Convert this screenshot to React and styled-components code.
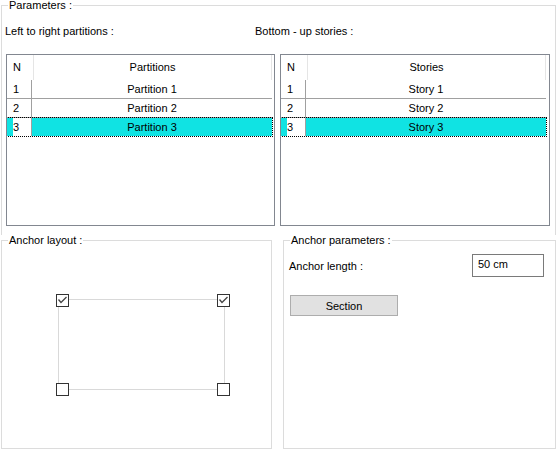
import React from "react";
import styled, { createGlobalStyle } from "styled-components";

const GlobalStyle = createGlobalStyle`
  html, body {
    margin: 0;
    padding: 0;
    background: #ffffff;
  }
  body {
    font-family: "Liberation Sans", Arial, sans-serif;
    font-size: 11px;
    color: #000000;
  }
`;

const Page = styled.div`
  width: 557px;
  height: 449px;
  padding-left: 1px;
  box-sizing: border-box;
  overflow: hidden;
  background: #ffffff;
`;

const Group = styled.fieldset`
  box-sizing: border-box;
  width: ${(p) => p.$width}px;
  height: ${(p) => p.$height}px;
  margin: 0;
  padding: 0;
  min-inline-size: 0;
  border: 1px solid #dcdcdc;
  ${(p) => (p.$open ? "border-bottom: none;" : "")}
`;

const Legend = styled.legend`
  margin-left: 6px;
  padding: 0 1px;
  line-height: 10px;
  font-size: 11px;
`;

const Labels = styled.div`
  display: grid;
  grid-template-columns: 250px 1fr;
  padding-left: 3px;
  margin-top: 15px;
  line-height: 13px;
`;

const Tables = styled.div`
  display: grid;
  grid-template-columns: 269px 270px;
  column-gap: 5px;
  padding-left: 4px;
  margin-top: 16px;
`;

const TableBox = styled.div`
  box-sizing: border-box;
  height: 172px;
  border: 1px solid #828790;
  background: #ffffff;
  overflow: hidden;
`;

const HeaderRow = styled.div`
  display: flex;
  height: 25px;
  line-height: 25px;
`;

const HeaderCell = styled.div`
  box-sizing: border-box;
  width: ${(p) => p.$w}px;
  border-right: 1px solid #e5e5e5;
  padding-left: ${(p) => (p.$center ? 0 : 6)}px;
  text-align: ${(p) => (p.$center ? "center" : "left")};
`;

const Row = styled.div`
  display: flex;
  box-sizing: border-box;
  width: 265px;
  height: ${(p) => (p.$selected ? 18 : 19)}px;
  line-height: 18px;
  border-bottom: ${(p) => (p.$selected ? "none" : "1px solid #a0a0a0")};
  background: ${(p) => (p.$selected ? "#10e3e3" : "#ffffff")};
  outline: ${(p) => (p.$selected ? "1px dotted #000000" : "none")};
`;

const NumCell = styled.div`
  box-sizing: border-box;
  display: flex;
  width: 25px;
  padding-left: 6px;
  border-right: 1px solid #a0a0a0;
`;

const NumText = styled.span`
  flex: 1;
  background: #ffffff;
`;

const NameCell = styled.div`
  flex: 1;
  text-align: center;
`;

const BottomRow = styled.div`
  display: flex;
  column-gap: 11px;
`;

const Diagram = styled.div`
  position: relative;
  width: 174px;
  height: 102px;
  margin: 49px 0 0 54px;
`;

const Frame = styled.div`
  position: absolute;
  left: 2px;
  top: 5px;
  width: 167px;
  height: 91px;
  box-sizing: border-box;
  border: 1px solid #d9d9d9;
`;

const Check = styled.div`
  position: absolute;
  ${(p) => (p.$right ? "right: 0;" : "left: 0;")}
  ${(p) => (p.$bottom ? "bottom: 0;" : "top: 0;")}
  width: 13px;
  height: 13px;
  box-sizing: border-box;
  border: 1px solid #333333;
  background: #ffffff;
  display: flex;
  align-items: center;
  justify-content: center;
`;

const FieldRow = styled.div`
  display: flex;
  align-items: center;
  justify-content: space-between;
  padding: 0 11px 0 5px;
  margin-top: 9px;
`;

const TextBox = styled.div`
  box-sizing: border-box;
  width: 72px;
  height: 23px;
  border: 1px solid #7a7a7a;
  padding-left: 5px;
  line-height: 19px;
`;

const Button = styled.button`
  display: block;
  box-sizing: border-box;
  width: 108px;
  height: 21px;
  margin: 18px 0 0 6px;
  padding: 0;
  border: 1px solid #adadad;
  background: #e1e1e1;
  font-family: inherit;
  font-size: 11px;
  color: #000000;
`;

const CheckMark = () => (
  <svg width="11" height="11" viewBox="0 0 11 11">
    <polyline points="1.5,4.5 4,7.5 9.5,2" fill="none" stroke="#444444" strokeWidth="1.3" />
  </svg>
);

const DataTable = ({ title, items }) => (
  <TableBox>
    <HeaderRow>
      <HeaderCell $w={27}>N</HeaderCell>
      <HeaderCell $w={238} $center>{title}</HeaderCell>
    </HeaderRow>
    {items.map((name, i) => {
      const selected = i === items.length - 1;
      return (
        <Row key={name} $selected={selected}>
          <NumCell>
            <NumText>{i + 1}</NumText>
          </NumCell>
          <NameCell>{name}</NameCell>
        </Row>
      );
    })}
  </TableBox>
);

export default function App() {
  return (
    <Page>
      <GlobalStyle />
      <Group $width={555} $height={235} $open>
        <Legend>Parameters :</Legend>
        <Labels>
          <span>Left to right partitions :</span>
          <span>Bottom - up stories :</span>
        </Labels>
        <Tables>
          <DataTable title="Partitions" items={["Partition 1", "Partition 2", "Partition 3"]} />
          <DataTable title="Stories" items={["Story 1", "Story 2", "Story 3"]} />
        </Tables>
      </Group>
      <BottomRow>
        <Group $width={271} $height={214}>
          <Legend>Anchor layout :</Legend>
          <Diagram>
            <Frame />
            <Check><CheckMark /></Check>
            <Check $right><CheckMark /></Check>
            <Check $bottom />
            <Check $right $bottom />
          </Diagram>
        </Group>
        <Group $width={273} $height={214}>
          <Legend>Anchor parameters :</Legend>
          <FieldRow>
            <span>Anchor length :</span>
            <TextBox>50 cm</TextBox>
          </FieldRow>
          <Button type="button">Section</Button>
        </Group>
      </BottomRow>
    </Page>
  );
}
